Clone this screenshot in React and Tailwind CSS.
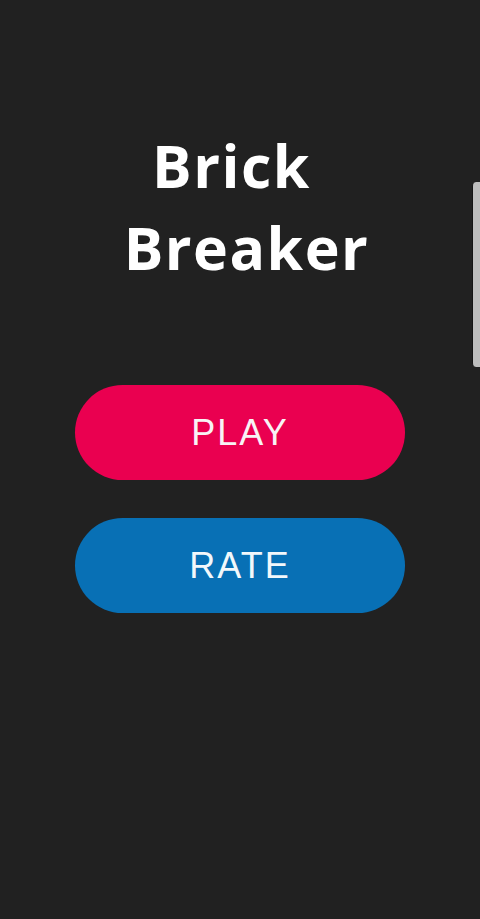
import React from 'react';

const App = () => {
  return (
    <div className="relative h-[919px] w-full overflow-hidden bg-[#212121] flex flex-col items-center">
      {/* Title */}
      <h1
        className="pt-[124px] text-[59px] leading-[82px] font-bold text-white text-center tracking-[1.5px]"
        style={{ fontFamily: '"Open Sans", "DejaVu Sans", sans-serif' }}
      >
        <span className="block pr-[17px]">Brick</span>
        <span className="block pl-[13px]">Breaker</span>
      </h1>

      {/* Buttons */}
      <div
        className="mt-[97px] flex flex-col gap-[38px]"
        style={{ fontFamily: '"Liberation Sans", Arial, sans-serif' }}
      >
        <button className="h-[95px] w-[330px] rounded-full bg-[#ea0050] text-[36px] tracking-[2px] text-[#f8f3f5]">
          PLAY
        </button>
        <button className="h-[95px] w-[330px] rounded-full bg-[#0870b5] text-[36px] tracking-[2px] text-[#f2f8fb]">
          RATE
        </button>
      </div>

      {/* Scroll indicator */}
      <div className="absolute right-0 top-[182px] h-[185px] w-[8px] rounded-l-[4px] border-l border-[#151515] bg-[#bdbdbd]" />
    </div>
  );
};

export default App;
